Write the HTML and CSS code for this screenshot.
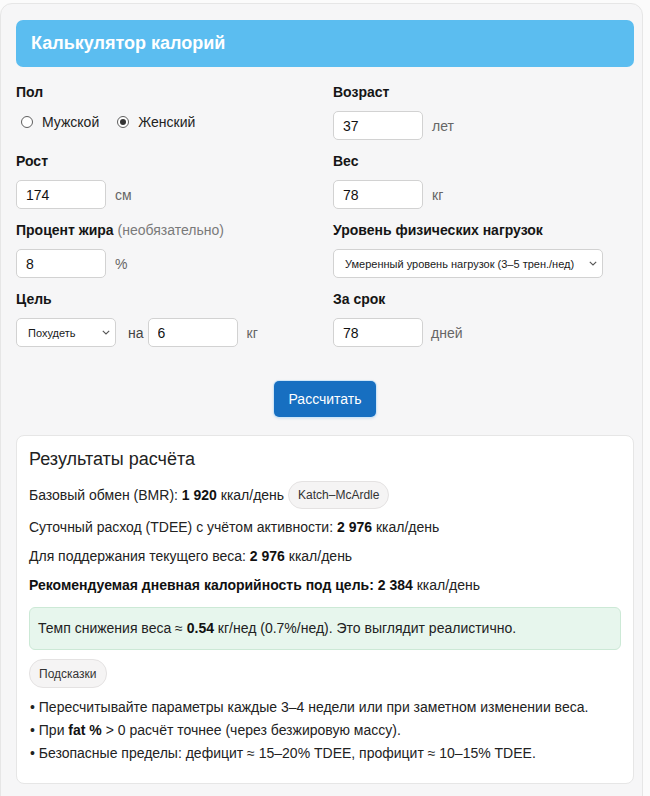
FILE: index.html
```html
<!DOCTYPE html>
<html lang="ru">
<head>
<meta charset="utf-8">
<title>Калькулятор калорий</title>
<link rel="stylesheet" href="styles.css">
</head>
<body>
<div class="app">
  <header class="hdr"><h1>Калькулятор калорий</h1></header>

  <form class="grid">
    <div class="field">
      <div class="lbl">Пол</div>
      <div class="radios">
        <label class="radio"><span class="dot"></span>Мужской</label>
        <label class="radio"><span class="dot on"></span>Женский</label>
      </div>
    </div>
    <div class="field">
      <div class="lbl">Возраст</div>
      <div class="ctrl"><input class="inp" value="37"><span class="unit">лет</span></div>
    </div>

    <div class="field">
      <div class="lbl">Рост</div>
      <div class="ctrl"><input class="inp" value="174"><span class="unit">см</span></div>
    </div>
    <div class="field">
      <div class="lbl">Вес</div>
      <div class="ctrl"><input class="inp" value="78"><span class="unit">кг</span></div>
    </div>

    <div class="field">
      <div class="lbl">Процент жира <span class="opt">(необязательно)</span></div>
      <div class="ctrl"><input class="inp" value="8"><span class="unit">%</span></div>
    </div>
    <div class="field">
      <div class="lbl">Уровень физических нагрузок</div>
      <div class="ctrl">
        <span class="sel sel-wide">
          <select><option>Умеренный уровень нагрузок (3–5 трен./нед)</option></select>
          <svg class="chev" width="8" height="5" viewBox="0 0 8 5"><path d="M0.8 0.8 L4 4 L7.2 0.8" fill="none" stroke="#555" stroke-width="1.1"/></svg>
        </span>
      </div>
    </div>

    <div class="field">
      <div class="lbl">Цель</div>
      <div class="ctrl">
        <span class="sel sel-goal">
          <select><option>Похудеть</option></select>
          <svg class="chev" width="8" height="5" viewBox="0 0 8 5"><path d="M0.8 0.8 L4 4 L7.2 0.8" fill="none" stroke="#555" stroke-width="1.1"/></svg>
        </span>
        <span class="na">на</span>
        <input class="inp inp-kg" value="6"><span class="unit">кг</span>
      </div>
    </div>
    <div class="field">
      <div class="lbl">За срок</div>
      <div class="ctrl"><input class="inp" value="78"><span class="unit unit-days">дней</span></div>
    </div>
  </form>

  <div class="actions"><button type="button" class="btn">Рассчитать</button></div>

  <section class="results">
    <h2>Результаты расчёта</h2>
    <div class="line line-first">Базовый обмен (BMR):&nbsp;<b>1 920</b>&nbsp;ккал/день <span class="tag tag-km">Katch–McArdle</span></div>
    <div class="line">Суточный расход (TDEE) с учётом активности: <b>2 976</b> ккал/день</div>
    <div class="line">Для поддержания текущего веса: <b>2 976</b> ккал/день</div>
    <div class="line"><b>Рекомендуемая дневная калорийность под цель: 2 384</b> ккал/день</div>
    <div class="note">Темп снижения веса ≈ <b>0.54</b> кг/нед (0.7%/нед). Это выглядит реалистично.</div>
    <span class="tag tag-hint">Подсказки</span>
    <ul class="tips">
      <li>• Пересчитывайте параметры каждые 3–4 недели или при заметном изменении веса.</li>
      <li>• При <b>fat %</b> &gt; 0 расчёт точнее (через безжировую массу).</li>
      <li>• Безопасные пределы: дефицит ≈ 15–20% TDEE, профицит ≈ 10–15% TDEE.</li>
    </ul>
  </section>
</div>
</body>
</html>
```

FILE: styles.css
```css
* { box-sizing: border-box; }

html, body {
  margin: 0;
  padding: 0;
  background: #fbfbfb;
}

body {
  font-family: "Liberation Sans", Arial, sans-serif;
  font-size: 14px;
  color: #1e1e1e;
  padding-top: 3px;
}

.app {
  width: 643px;
  height: 820px;
  background: #f6f6f7;
  border: 1px solid #e6e6e6;
  border-radius: 12px;
  padding: 16px 8px 14px 15px;
}

.hdr {
  height: 47px;
  background: #5bbdf0;
  border-radius: 7px;
  display: flex;
  align-items: center;
  padding-left: 15px;
  padding-bottom: 1px;
}

.hdr h1 {
  margin: 0;
  font-size: 18px;
  font-weight: bold;
  color: #ffffff;
}

.grid {
  margin: 16px 0 0 0;
  display: grid;
  grid-template-columns: 301px 301px;
  column-gap: 16px;
  row-gap: 12px;
}

.field { display: flex; flex-direction: column; }

.lbl {
  font-weight: bold;
  font-size: 14px;
  line-height: 18px;
  color: #151515;
  margin-bottom: 10px;
}

.opt { font-weight: normal; color: #7a7a7a; }

.radios {
  display: flex;
  align-items: center;
  height: 22px;
  padding-left: 5px;
}

.radio {
  display: flex;
  align-items: center;
  color: #222;
  margin-right: 18px;
}

.dot {
  width: 12px;
  height: 12px;
  border: 1px solid #5f5f5f;
  border-radius: 50%;
  margin-right: 9px;
  display: flex;
  align-items: center;
  justify-content: center;
  background: #fff;
}

.dot.on::after {
  content: "";
  width: 6px;
  height: 6px;
  border-radius: 50%;
  background: #333;
}

.ctrl {
  display: flex;
  align-items: center;
  height: 29px;
}

.inp {
  width: 90px;
  height: 29px;
  border: 1px solid #d2d2d2;
  border-radius: 5px;
  background: #fff;
  padding: 0 9px;
  font-family: "Liberation Sans", Arial, sans-serif;
  font-size: 14px;
  color: #111;
  outline: none;
}

.inp-kg { width: 90px; }

.unit {
  margin-left: 9px;
  color: #666;
  font-size: 14px;
}

.unit-days { margin-left: 8px; }

.na {
  margin: 0 4px 0 12px;
  color: #444;
}

.sel {
  position: relative;
  display: inline-flex;
}

.sel select {
  -webkit-appearance: none;
  appearance: none;
  height: 29px;
  border: 1px solid #d2d2d2;
  border-radius: 5px;
  background: #fff;
  font-family: "Liberation Sans", Arial, sans-serif;
  font-size: 11px;
  color: #1a1a1a;
  padding: 0 0 0 11px;
  outline: none;
}

.sel-wide select { width: 270px; }
.sel-goal select { width: 100px; }

.chev {
  position: absolute;
  right: 6px;
  top: 12px;
  pointer-events: none;
}

.actions {
  margin-top: 34px;
  display: flex;
  justify-content: center;
}

.btn {
  width: 102px;
  height: 36px;
  border: none;
  border-radius: 5px;
  background: #176fc1;
  color: #fff;
  font-family: "Liberation Sans", Arial, sans-serif;
  font-size: 14px;
  box-shadow: 0 0 0 1px #cfe6f8, 0 1px 3px rgba(23, 111, 193, 0.25);
  cursor: pointer;
}

.results {
  margin-top: 18px;
  background: #fff;
  border: 1px solid #e6e6e6;
  border-radius: 8px;
  padding: 12px 12px 18px 12px;
  display: flex;
  flex-direction: column;
  align-items: flex-start;
}

.results h2 {
  margin: 0 0 10px 0;
  font-size: 18px;
  font-weight: normal;
  line-height: 23px;
  color: #222;
}

.line {
  line-height: 18px;
  margin-bottom: 11px;
  color: #222;
  display: flex;
  align-items: center;
  white-space: pre;
}

.line b, .note b, .tips b { color: #111; }

.line-first { height: 28px; margin-bottom: 9px; }

.tag {
  display: inline-flex;
  align-items: center;
  height: 28px;
  border: 1px solid #e4e2e2;
  background: #f5f4f4;
  border-radius: 14px;
  font-size: 12px;
  color: #333;
}

.tag-km { padding: 0 9px; margin-left: 0; }

.note {
  margin-top: 2px;
  width: 100%;
  background: #e7f6ed;
  border: 1px solid #cce9d6;
  border-radius: 6px;
  padding: 11px 8px 12px 8px;
  line-height: 18px;
  color: #222;
}

.tag-hint {
  margin-top: 9px;
  height: 29px;
  padding: 0 9px;
}

.tips {
  list-style: none;
  margin: 8px 0 0 0;
  padding: 0 0 0 1px;
}

.tips li {
  line-height: 23px;
  color: #222;
}
```
